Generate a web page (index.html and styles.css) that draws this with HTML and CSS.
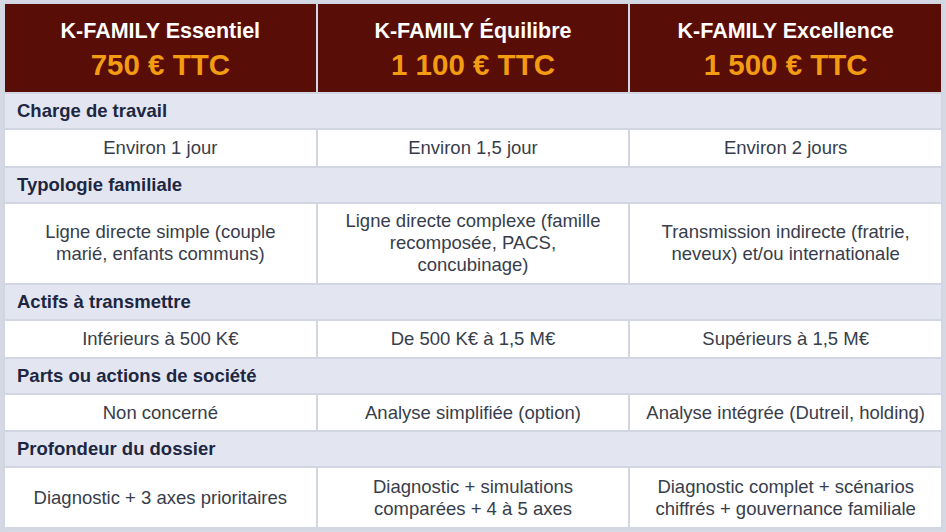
FILE: index.html
```html
<!DOCTYPE html>
<html lang="fr">
<head>
<meta charset="utf-8">
<title>K-FAMILY</title>
<link rel="stylesheet" href="styles.css">
</head>
<body>
<table class="offers">
  <colgroup><col class="c"><col class="c"><col class="c"></colgroup>
  <thead>
    <tr>
      <th class="plan"><div class="plan-name">K-FAMILY Essentiel</div><div class="plan-price">750 € TTC</div></th>
      <th class="plan"><div class="plan-name">K-FAMILY Équilibre</div><div class="plan-price">1 100 € TTC</div></th>
      <th class="plan"><div class="plan-name">K-FAMILY Excellence</div><div class="plan-price">1 500 € TTC</div></th>
    </tr>
  </thead>
  <tbody>
    <tr><td class="section" colspan="3">Charge de travail</td></tr>
    <tr><td class="val">Environ 1 jour</td><td class="val">Environ 1,5 jour</td><td class="val">Environ 2 jours</td></tr>
    <tr><td class="section" colspan="3">Typologie familiale</td></tr>
    <tr><td class="val">Ligne directe simple (couple<br>marié, enfants communs)</td><td class="val">Ligne directe complexe (famille<br>recomposée, PACS,<br>concubinage)</td><td class="val">Transmission indirecte (fratrie,<br>neveux) et/ou internationale</td></tr>
    <tr><td class="section" colspan="3">Actifs à transmettre</td></tr>
    <tr><td class="val">Inférieurs à 500 K€</td><td class="val">De 500 K€ à 1,5 M€</td><td class="val">Supérieurs à 1,5 M€</td></tr>
    <tr><td class="section" colspan="3">Parts ou actions de société</td></tr>
    <tr><td class="val">Non concerné</td><td class="val">Analyse simplifiée (option)</td><td class="val">Analyse intégrée (Dutreil, holding)</td></tr>
    <tr><td class="section" colspan="3">Profondeur du dossier</td></tr>
    <tr><td class="val val-last">Diagnostic + 3 axes prioritaires</td><td class="val val-last">Diagnostic + simulations<br>comparées + 4 à 5 axes</td><td class="val val-last">Diagnostic complet + scénarios<br>chiffrés + gouvernance familiale</td></tr>
  </tbody>
</table>
</body>
</html>
```
FILE: styles.css
```css
html, body {
  margin: 0;
  padding: 0;
}
body {
  background: #d5d9e4;
  padding: 2px 3px;
  font-family: "Liberation Sans", Arial, Helvetica, sans-serif;
}
.offers {
  width: 940px;
  table-layout: fixed;
  border-collapse: separate;
  border-spacing: 2px;
  background: #d2d6e2;
}
.c {
  width: 33.333%;
}
.plan {
  background: #590d07;
  padding: 14px 6px 10.5px;
  text-align: center;
  vertical-align: middle;
  font-weight: bold;
}
.plan-name {
  color: #ffffff;
  font-size: 21.5px;
  line-height: 26px;
}
.plan-price {
  margin-top: 3.5px;
  color: #f39c12;
  font-size: 29.5px;
  line-height: 34px;
}
.section {
  background: #e3e6f1;
  color: #1e2742;
  font-weight: bold;
  font-size: 18.5px;
  line-height: 22px;
  padding: 6px 12px;
  text-align: left;
}
.val {
  background: #ffffff;
  color: #383d4b;
  font-size: 18.5px;
  line-height: 22px;
  padding: 6.8px 6px;
  text-align: center;
  vertical-align: middle;
}
.val-last {
  padding-top: 7.8px;
}
```
